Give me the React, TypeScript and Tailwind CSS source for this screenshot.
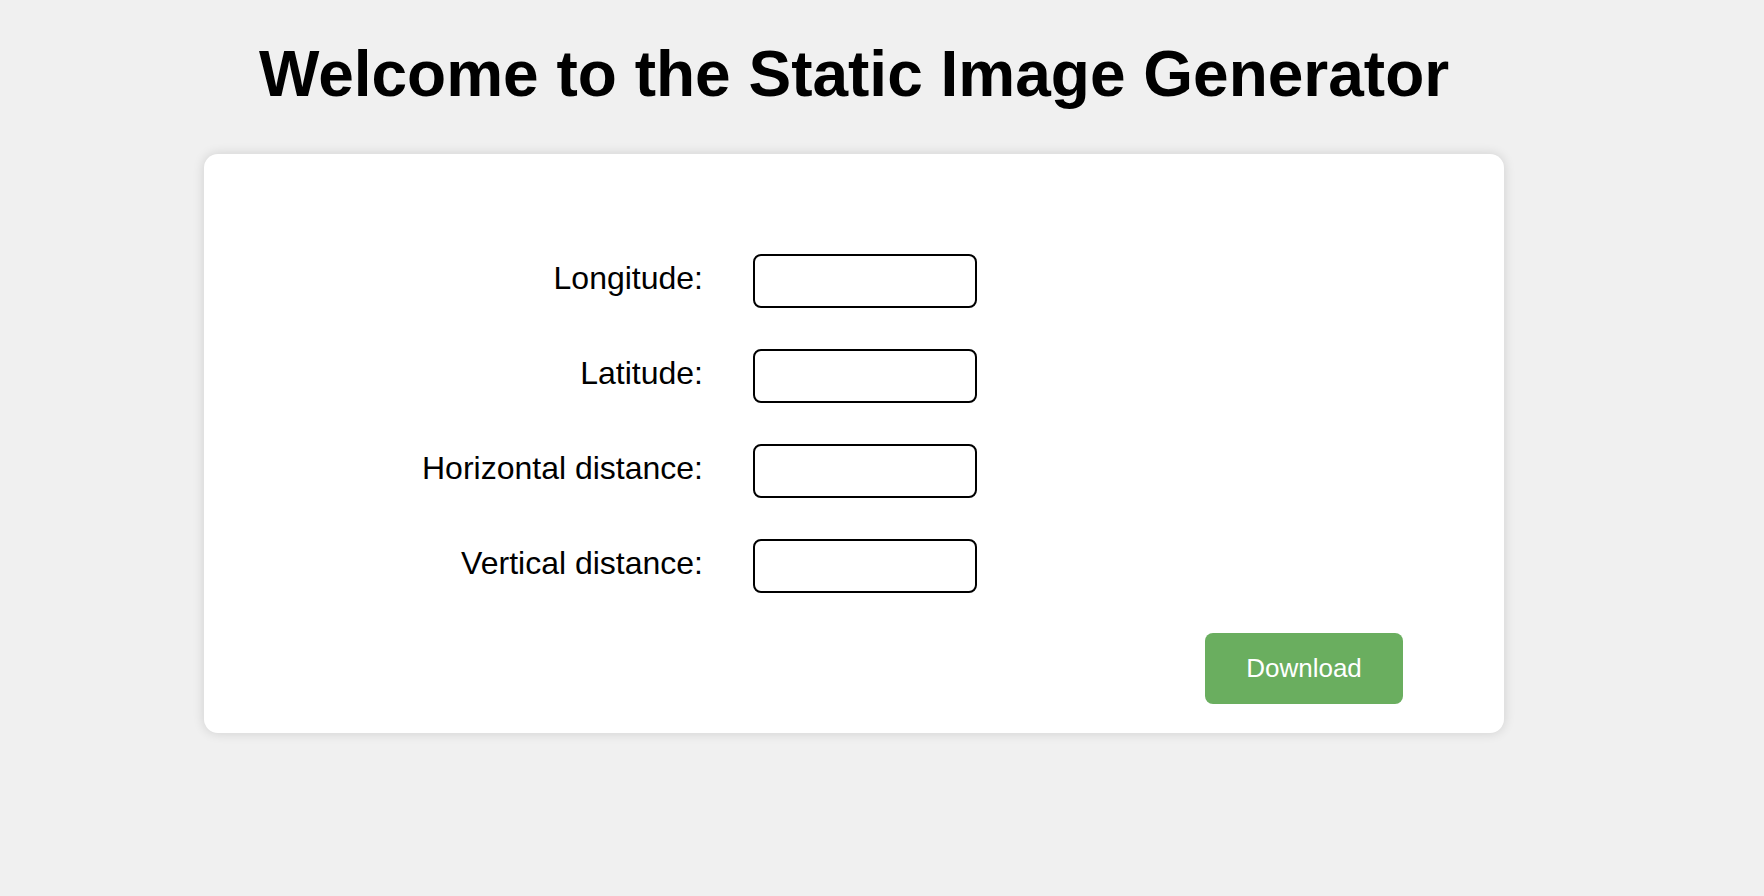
export default function App() {
  const fields = ['Longitude:', 'Latitude:', 'Horizontal distance:', 'Vertical distance:']

  return (
    <div className="min-h-screen bg-[#f0f0f0] font-['Liberation_Sans',Arial,sans-serif] text-black">
      <div className="ml-[204px] w-[1300px] pt-[42px]">
        <h1 className="text-center text-[64px] font-bold leading-none">Welcome to the Static Image Generator</h1>

        <div className="mt-[48px] rounded-[14px] bg-white pb-[29px] pt-[100px] shadow-[0_0_12px_rgba(0,0,0,0.14)]">
          <div className="flex flex-col gap-[41px] pl-[199px]">
            {fields.map((label) => (
              <div key={label} className="flex items-center gap-[50px]">
                <label className="w-[300px] pb-[6px] text-right text-[32px] leading-none">{label}</label>
                <input
                  type="text"
                  className="h-[54px] w-[224px] rounded-[8px] border-2 border-black bg-white px-2 text-[20px] outline-none"
                />
              </div>
            ))}
          </div>

          <div className="mt-[40px] flex justify-end pr-[101px]">
            <button className="h-[71px] w-[198px] rounded-[8px] bg-[#6aae5f] text-[26px] text-white">Download</button>
          </div>
        </div>
      </div>
    </div>
  )
}
